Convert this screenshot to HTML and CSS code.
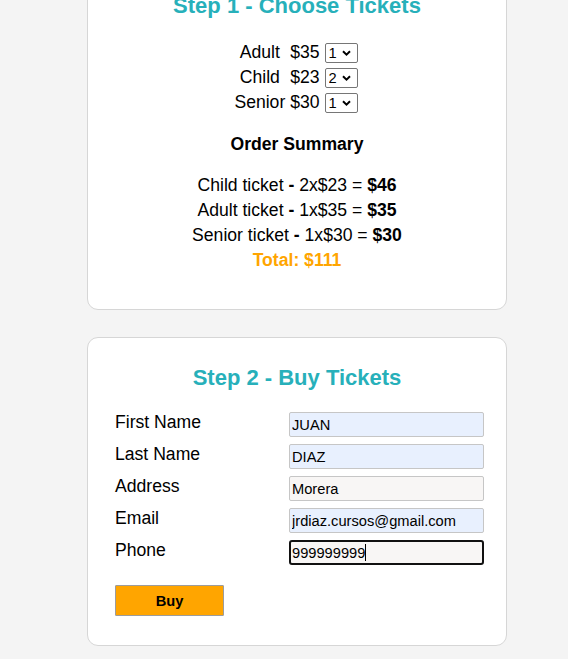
FILE: index.html
```html
<!DOCTYPE html>
<html>
<head>
<meta charset="utf-8">
<link rel="stylesheet" href="styles.css">
</head>
<body>
<main class="page">
  <section class="card card-step1">
    <h2 class="step-title">Step 1 - Choose Tickets</h2>
    <div class="tickets">
      <span class="cell">Adult</span><span class="cell">$35</span><span class="cell"><select class="qty"><option>1</option></select></span>
      <span class="cell">Child</span><span class="cell">$23</span><span class="cell"><select class="qty"><option>1</option><option selected>2</option></select></span>
      <span class="cell">Senior</span><span class="cell">$30</span><span class="cell"><select class="qty"><option>1</option></select></span>
    </div>
    <h3 class="summary-title">Order Summary</h3>
    <div class="summary">
      <div class="summary-line">Child ticket <b>-</b> 2x$23 = <b>$46</b></div>
      <div class="summary-line">Adult ticket <b>-</b> 1x$35 = <b>$35</b></div>
      <div class="summary-line">Senior ticket <b>-</b> 1x$30 = <b>$30</b></div>
      <div class="summary-line total">Total: $111</div>
    </div>
  </section>

  <section class="card card-step2">
    <h2 class="step-title step2-title">Step 2 - Buy Tickets</h2>
    <form class="buy-form">
      <label class="field-label">First Name</label>
      <input class="field autofill" type="text" value="JUAN">
      <label class="field-label">Last Name</label>
      <input class="field autofill" type="text" value="DIAZ">
      <label class="field-label">Address</label>
      <input class="field" type="text" value="Morera">
      <label class="field-label">Email</label>
      <input class="field autofill" type="text" value="jrdiaz.cursos@gmail.com">
      <label class="field-label">Phone</label>
      <span class="field-wrap">
        <input class="field focused" type="text" value="999999999">
        <span class="caret"></span>
      </span>
    </form>
    <button class="buy-btn" type="button">Buy</button>
  </section>
</main>
</body>
</html>
```

FILE: styles.css
```css
html, body {
  margin: 0;
  padding: 0;
  background: #f4f4f4;
}

body {
  font-family: "Liberation Sans", Arial, sans-serif;
  font-size: 17.6px;
  color: #000;
}

.page {
  display: flex;
  flex-direction: column;
  gap: 27px;
  width: 420px;
  margin: -35px 0 0 87px;
}

.card {
  box-sizing: border-box;
  width: 420px;
  background: #fff;
  border: 1px solid #d6d6d6;
  border-radius: 11px;
}

.card-step1 {
  padding: 27px 20px 36px;
  text-align: center;
}

.card-step2 {
  padding: 27px 22px 29px 27px;
}

.step-title {
  margin: 0;
  font-size: 22px;
  line-height: 25px;
  font-weight: bold;
  color: #27b0ba;
  text-align: center;
}

.step2-title {
  margin-right: 5px;
}

.tickets {
  display: grid;
  grid-template-columns: repeat(3, auto);
  grid-auto-rows: 25px;
  justify-content: center;
  justify-items: center;
  align-items: baseline;
  column-gap: 5px;
  margin-top: 22px;
  padding-right: 2px;
}

.cell {
  line-height: 25px;
}

.qty {
  -webkit-appearance: none;
  appearance: none;
  box-sizing: border-box;
  font-family: "Liberation Sans", Arial, sans-serif;
  font-size: 14.67px;
  width: 33px;
  height: 20px;
  padding: 0 0 0 3px;
  margin: 0;
  border: 1px solid #767676;
  border-radius: 2px;
  color: #000;
  vertical-align: baseline;
  background: #fff url("data:image/svg+xml;utf8,<svg xmlns='http://www.w3.org/2000/svg' width='9' height='6' viewBox='0 0 9 6'><path d='M1 1.2 L4.5 4.6 L8 1.2' fill='none' stroke='black' stroke-width='2'/></svg>") no-repeat right 6px center;
}

.summary-title {
  margin: 19px 0 0;
  font-size: 17.6px;
  line-height: 20px;
  font-weight: bold;
}

.summary {
  margin-top: 19px;
}

.summary-line {
  line-height: 25px;
  height: 25px;
}

.total {
  color: #ffa500;
  font-weight: bold;
}

.buy-form {
  display: grid;
  grid-template-columns: 174px 195px;
  row-gap: 7px;
  margin-top: 22px;
  align-items: start;
}

.field-label {
  font-size: 17.6px;
  line-height: 20px;
}

.field-wrap {
  position: relative;
  display: block;
  height: 25px;
}

.field {
  box-sizing: border-box;
  display: block;
  width: 195px;
  height: 25px;
  margin: 0;
  padding: 1px 2px;
  font-family: "Liberation Sans", Arial, sans-serif;
  font-size: 14.67px;
  color: #000;
  background: #f8f6f5;
  border: 1px solid #c6c6c6;
  border-radius: 2px;
  outline: none;
}

.autofill {
  background: #e8f0fe;
}

.focused {
  border: 2px solid #111;
  border-radius: 3px;
  padding: 0 1px;
}

.caret {
  position: absolute;
  left: 76px;
  top: 4px;
  width: 1px;
  height: 17px;
  background: #000;
}

.buy-btn {
  box-sizing: border-box;
  display: block;
  width: 109px;
  height: 31px;
  margin-top: 20px;
  padding: 0;
  background: #ffa500;
  border: 1px solid #9c9c9c;
  border-radius: 1px;
  font-family: "Liberation Sans", Arial, sans-serif;
  font-size: 14.67px;
  font-weight: bold;
  color: #000;
}
```
